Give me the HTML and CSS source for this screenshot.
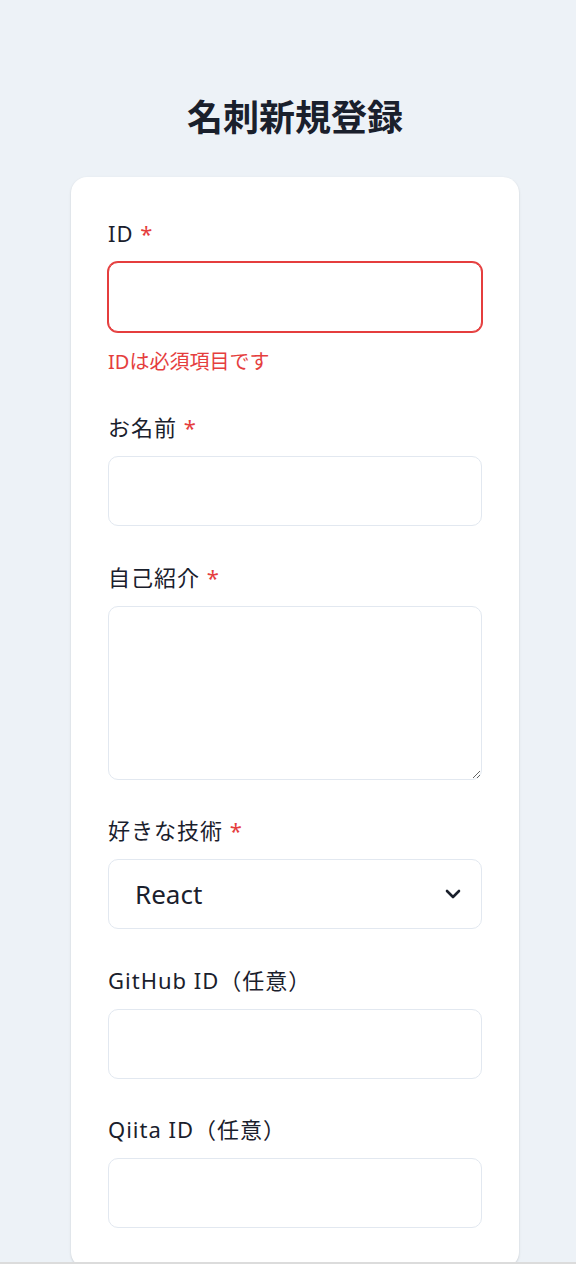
FILE: index.html
```html
<!DOCTYPE html>
<html lang="ja">
<head>
  <meta charset="UTF-8">
  <meta name="viewport" content="width=device-width, initial-scale=1.0">
  <title>名刺新規登録</title>
  <link rel="stylesheet" href="styles.css">
</head>
<body>

  <div class="container">
    <h1 class="page-title">名刺新規登録</h1>

    <form class="card">
      <div class="field">
        <label class="field-label" for="user-id">ID <span class="required">*</span></label>
        <input class="field-input invalid" id="user-id" type="text">
        <p class="field-error">IDは必須項目です</p>
      </div>

      <div class="field">
        <label class="field-label" for="name">お名前 <span class="required">*</span></label>
        <input class="field-input" id="name" type="text">
      </div>

      <div class="field">
        <label class="field-label" for="description">自己紹介 <span class="required">*</span></label>
        <textarea class="field-input field-textarea" id="description"></textarea>
      </div>

      <div class="field">
        <label class="field-label" for="skill">好きな技術 <span class="required">*</span></label>
        <div class="select-wrap">
          <select class="field-input field-select" id="skill">
            <option>React</option>
            <option>TypeScript</option>
            <option>GitHub</option>
          </select>
          <svg class="select-icon" width="16" height="10" viewBox="0 0 16 10">
            <path d="M2 2 L8 8 L14 2" fill="none" stroke="#1a202c" stroke-width="2.6" stroke-linecap="round" stroke-linejoin="round"/>
          </svg>
        </div>
      </div>

      <div class="field">
        <label class="field-label" for="github-id">GitHub ID（任意）</label>
        <input class="field-input" id="github-id" type="text">
      </div>

      <div class="field">
        <label class="field-label" for="qiita-id">Qiita ID（任意）</label>
        <input class="field-input" id="qiita-id" type="text">
      </div>
    </form>
  </div>

</body>
</html>
```

FILE: styles.css
```css
body {
  margin: 0;
  background: #edf2f7;
  color: #1a202c;
  font-family: 'Noto Sans', 'Noto Sans CJK JP', sans-serif;
}

body::after {
  content: '';
  position: fixed;
  left: 0;
  right: 0;
  bottom: 0;
  height: 2px;
  background: #dcdcdc;
}

.container {
  width: 448px;
  margin-left: 71px;
  padding-top: 93px;
}

.page-title {
  margin: 0 0 40px;
  font-size: 36px;
  line-height: 44px;
  font-weight: 700;
  text-align: center;
  font-family: 'Noto Sans CJK JP', sans-serif;
}

.card {
  background: white;
  border-radius: 16px;
  padding: 41px 37px 40px;
  box-shadow: 0 1px 3px rgba(0,0,0,0.1), 0 1px 2px rgba(0,0,0,0.06);
}

.field + .field {
  margin-top: 35.5px;
}

.field-label {
  display: block;
  margin-bottom: 14px;
  font-size: 22px;
  line-height: 30px;
  font-weight: 400;
  letter-spacing: 1px;
}

.required {
  color: #e53e3e;
}

.field-input {
  display: block;
  width: 100%;
  height: 70px;
  box-sizing: border-box;
  padding: 0 26px;
  border: 1px solid #e2e8f0;
  border-radius: 10px;
  background: white;
  color: #1a202c;
  font-family: inherit;
  font-size: 22px;
  outline: none;
}

.field-input.invalid {
  border-color: #e53e3e;
  box-shadow: 0 0 0 1px #e53e3e;
}

.field-error {
  margin: 14.5px 0 0;
  font-size: 20px;
  line-height: 30px;
  color: #e53e3e;
}

.field-textarea {
  height: 174px;
  padding: 16px 26px;
}

.select-wrap {
  position: relative;
}

.field-select {
  appearance: none;
  -webkit-appearance: none;
  font-size: 26px;
}

.select-icon {
  position: absolute;
  right: 21px;
  top: 50%;
  transform: translateY(-50%);
  pointer-events: none;
}
```
